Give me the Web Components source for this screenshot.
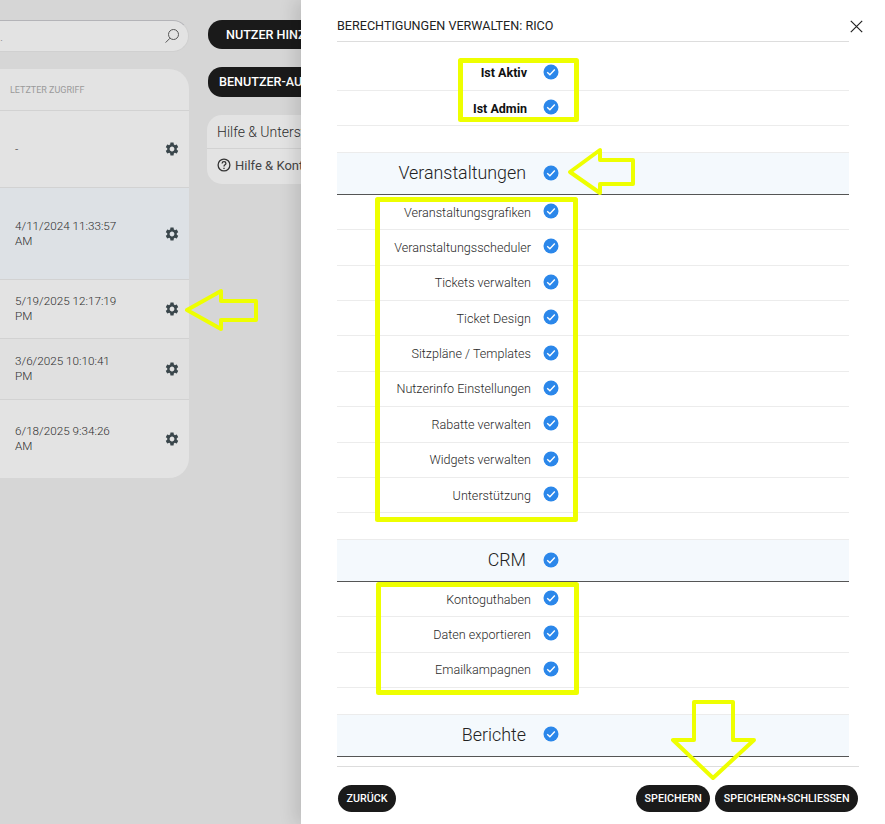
<!DOCTYPE html>
<html lang="de">
<head>
<meta charset="utf-8">
<title>Berechtigungen verwalten</title>
<style>
    html, body { margin: 0; height: 100%; }
    body { font-family: Roboto, "Liberation Sans", sans-serif; overflow: hidden; background: #d6d6d6; }
</style>
</head>
<body>
<app-page></app-page>

<script>
const GEAR = 'M19.14 12.94c.04-.3.06-.61.06-.94 0-.32-.02-.64-.07-.94l2.03-1.58c.18-.14.23-.41.12-.61l-1.92-3.32c-.12-.22-.37-.29-.59-.22l-2.39.96c-.5-.38-1.03-.7-1.62-.94l-.36-2.54c-.04-.24-.24-.41-.48-.41h-3.84c-.24 0-.43.17-.47.41l-.36 2.54c-.59.24-1.13.57-1.62.94l-2.39-.96c-.22-.08-.47 0-.59.22L2.74 8.87c-.12.21-.08.47.12.61l2.03 1.58c-.05.3-.09.63-.09.94s.02.64.07.94l-2.03 1.58c-.18.14-.23.41-.12.61l1.92 3.32c.12.22.37.29.59.22l2.39-.96c.5.38 1.03.7 1.62.94l.36 2.54c.05.24.24.41.48.41h3.84c.24 0 .44-.17.47-.41l.36-2.54c.59-.24 1.13-.56 1.62-.94l2.39.96c.22.08.47 0 .59-.22l1.92-3.32c.12-.22.07-.47-.12-.61l-2.01-1.58zM12 15.6c-1.98 0-3.6-1.62-3.6-3.6s1.62-3.6 3.6-3.6 3.6 1.62 3.6 3.6-1.62 3.6-3.6 3.6z';

// Suchfeld
class SearchBox extends HTMLElement {
    constructor() {
        super();
        this.attachShadow({ mode: 'open' });
    }
    connectedCallback() {
        this.shadowRoot.innerHTML = `
            <style>
                :host { display: flex; align-items: center; justify-content: space-between; box-sizing: border-box; height: 32px; padding: 0 8px 0 0; background: #e3e3e3; border: 1px solid #d0d0d0; border-left: 0; border-top-color: #b4b4b8; border-radius: 0 16px 16px 0; color: #8a8a8a; font-size: 13px; font-weight: 300; }
                span { margin-left: 0; white-space: nowrap; }
                svg { width: 16px; height: 16px; fill: none; stroke: #555; stroke-width: 1; }
            </style>
            <span>.</span>
            <svg viewBox="0 0 16 16"><circle cx="9.5" cy="6.5" r="5"/><path d="M6 10.2 1.6 14.6"/></svg>
        `;
    }
}
customElements.define('search-box', SearchBox);

// Tabellenzeile
class UserRow extends HTMLElement {
    constructor() {
        super();
        this.attachShadow({ mode: 'open' });
    }
    connectedCallback() {
        this.shadowRoot.innerHTML = `
            <style>
                :host { display: flex; align-items: center; justify-content: space-between; box-sizing: border-box; padding: 0 9px 0 15px; border-top: 1px solid #d2d2d2; background: var(--row-bg, transparent); height: var(--row-h); color: #2e2e2e; font-size: 11.7px; font-weight: 300; line-height: 15px; }
                div { width: 112px; }
                svg { width: 16px; height: 16px; fill: #3a464b; flex: none; }
            </style>
            <div><slot></slot></div>
            <svg viewBox="0 0 24 24"><path d="${GEAR}"/></svg>
        `;
    }
}
customElements.define('user-row', UserRow);

// Benutzertabelle
class UserTable extends HTMLElement {
    constructor() {
        super();
        this.attachShadow({ mode: 'open' });
    }
    connectedCallback() {
        this.shadowRoot.innerHTML = `
            <style>
                :host { display: block; margin-top: 17px; background: #e3e3e3; border-radius: 0 20px 20px 0; overflow: hidden; }
                header { box-sizing: border-box; height: 41px; padding: 16px 10px 0; color: #9a9a9a; font-size: 9px; font-weight: 400; }
            </style>
            <header>LETZTER ZUGRIFF</header>
            <slot></slot>
        `;
    }
}
customElements.define('user-table', UserTable);

// Schwarzer Button
class PillButton extends HTMLElement {
    constructor() {
        super();
        this.attachShadow({ mode: 'open' });
    }
    connectedCallback() {
        this.shadowRoot.innerHTML = `
            <style>
                :host { display: inline-flex; align-items: center; box-sizing: border-box; height: var(--h, 27px); padding: 0 var(--pad, 8.5px) 1px; background: #1a1a1a; color: #fff; border-radius: 14px; font-size: var(--fs, 10.7px); font-weight: 500; white-space: nowrap; }
            </style>
            <slot></slot>
        `;
    }
}
customElements.define('pill-button', PillButton);

// Hilfe-Karte
class HelpCard extends HTMLElement {
    constructor() {
        super();
        this.attachShadow({ mode: 'open' });
    }
    connectedCallback() {
        this.shadowRoot.innerHTML = `
            <style>
                :host { display: block; width: 180px; margin-top: 18px; background: #e3e3e3; border-radius: 15px; color: #2e2e2e; font-weight: 300; white-space: nowrap; }
                .title { box-sizing: border-box; height: 34px; padding: 9px 10px 0; font-size: 14px; border-bottom: 1px solid #d2d2d2; }
                .link { display: flex; align-items: center; gap: 4px; height: 34px; padding: 0 10px 3px; box-sizing: border-box; font-size: 13px; font-weight: 400; color: #444; }
                svg { width: 14px; height: 14px; fill: none; stroke: #333; stroke-width: 1.3; flex: none; }
                .link { height: 35px; }
            </style>
            <div class="title">Hilfe &amp; Unterstützung</div>
            <div class="link">
                <svg viewBox="0 0 14 14"><circle cx="7" cy="7" r="5.9"/><path d="M5.1 5.5C5.2 3 8.9 3.2 8.9 5.4 8.9 6.8 7 6.8 7 8.4"/><path d="M7 9.7v1.2"/></svg>
                Hilfe &amp; Kontakt
            </div>
        `;
    }
}
customElements.define('help-card', HelpCard);

// Blaues Häkchen
class CheckMark extends HTMLElement {
    constructor() {
        super();
        this.attachShadow({ mode: 'open' });
    }
    connectedCallback() {
        this.shadowRoot.innerHTML = `
            <style>
                :host { display: block; width: 16px; height: 16px; }
                svg { display: block; width: 16px; height: 16px; }
            </style>
            <svg viewBox="0 0 16 16"><circle cx="8" cy="8" r="7.5" fill="#2b87ea"/><path d="M4.2 8.3 6.9 10.8 11.8 5.6" fill="none" stroke="#fff" stroke-width="1.4"/></svg>
        `;
    }
}
customElements.define('check-mark', CheckMark);

// Berechtigungszeile
class PermRow extends HTMLElement {
    constructor() {
        super();
        this.attachShadow({ mode: 'open' });
    }
    connectedCallback() {
        this.shadowRoot.innerHTML = `
            <style>
                :host { display: grid; grid-template-columns: 194px 40px; align-items: center; justify-items: center; box-sizing: border-box; height: 35.4px; border-bottom: 1px solid #ececec; color: #2a2a2a; font-size: 12.6px; font-weight: 300; }
                :host([strong]) { font-weight: 700; color: #111; font-size: 12.5px; }
                :host([strong]) span { padding-right: 4px; }
                span { justify-self: end; white-space: nowrap; }
                check-mark { margin-bottom: 2px; }
            </style>
            <span><slot></slot></span>
            <check-mark></check-mark>
        `;
    }
}
customElements.define('perm-row', PermRow);

// Abschnittstitel
class PermSection extends HTMLElement {
    constructor() {
        super();
        this.attachShadow({ mode: 'open' });
    }
    connectedCallback() {
        this.shadowRoot.innerHTML = `
            <style>
                :host { display: grid; grid-template-columns: 189px 50px; align-items: center; justify-items: center; box-sizing: border-box; height: 42.55px; margin-top: 26px; padding-bottom: 2px; background: #f4f9fd; border-top: 1px solid #ececec; border-bottom: 1px solid #555; color: #222; font-size: 17.85px; font-weight: 300; }
                span { justify-self: end; white-space: nowrap; }
            </style>
            <span><slot></slot></span>
            <check-mark></check-mark>
        `;
    }
}
customElements.define('perm-section', PermSection);

// Seitenleiste mit Berechtigungen
class PermDrawer extends HTMLElement {
    constructor() {
        super();
        this.attachShadow({ mode: 'open' });
    }
    connectedCallback() {
        this.shadowRoot.innerHTML = `
            <style>
                :host { position: absolute; top: 0; right: 0; bottom: 0; width: 584px; display: flex; flex-direction: column; box-sizing: border-box; padding: 0 26px 0 36px; background: #fff; box-shadow: -6px 0 16px rgba(0,0,0,.12); color: #222; }
                header { display: flex; align-items: center; justify-content: space-between; flex: none; height: 42px; box-sizing: border-box; margin-right: 10px; padding-top: 9px; border-bottom: 1px solid #ddd; font-size: 12.6px; font-weight: 400; color: #222; }
                .close { position: absolute; top: 20px; right: 22px; width: 13px; height: 13px; }
                .scroll { flex: 1; min-height: 0; overflow: hidden; padding: 13.5px 10px 0 0; }
                footer { display: flex; align-items: center; justify-content: space-between; flex: none; height: 58px; box-sizing: border-box; border-top: 1px solid #ddd; padding: 6px 1px 0 1px; }
                .right { display: flex; gap: 5px; }
            </style>
            <header>BERECHTIGUNGEN VERWALTEN: RICO</header>
            <svg class="close" viewBox="0 0 13 13" fill="none" stroke="#222" stroke-width="1.2"><path d="M.8.8l11.4 11.4M12.2.8.8 12.2"/></svg>
            <div class="scroll"><slot></slot></div>
            <footer>
                <pill-button>ZURÜCK</pill-button>
                <div class="right">
                    <pill-button>SPEICHERN</pill-button>
                    <pill-button>SPEICHERN+SCHLIESSEN</pill-button>
                </div>
            </footer>
        `;
    }
}
customElements.define('perm-drawer', PermDrawer);

// Gelbe Markierungen aus dem Screenshot
class MarkupLayer extends HTMLElement {
    constructor() {
        super();
        this.attachShadow({ mode: 'open' });
    }
    connectedCallback() {
        this.shadowRoot.innerHTML = `
            <style>
                :host { position: absolute; inset: 0; pointer-events: none; }
                svg { display: block; width: 885px; height: 824px; fill: none; stroke: #eeff00; stroke-width: 5; stroke-linejoin: round; }
            </style>
            <svg viewBox="0 0 885 824">
                <rect x="460.5" y="60.5" width="116" height="59"/>
                <rect x="377.5" y="199.5" width="198" height="320"/>
                <rect x="378.5" y="584.5" width="198" height="108"/>
                <path d="M570 172 600 150v10h33v24h-33v9z" stroke-width="4"/>
                <path d="M187 310 221 291v10h35v19h-35v9z" stroke-width="4"/>
                <path d="M694 702h39v38h21l-41 38-40-38h21z" stroke-width="4"/>
            </svg>
        `;
    }
}
customElements.define('markup-layer', MarkupLayer);

// Gesamte Seite
class AppPage extends HTMLElement {
    constructor() {
        super();
        this.attachShadow({ mode: 'open' });
    }
    connectedCallback() {
        this.shadowRoot.innerHTML = `
            <style>
                :host { display: block; position: relative; width: 885px; height: 824px; overflow: hidden; background: #d6d6d6; }
                .page { display: grid; grid-template-columns: 189px 1fr; gap: 18px; padding-top: 20px; }
                .left { min-width: 0; }
                .side { display: flex; flex-direction: column; align-items: flex-start; }
                .add { --h: 29px; --pad: 18px; --fs: 12.6px; margin-left: 1px; }
                .users { --h: 30px; --pad: 11px; --fs: 12.6px; margin: 18px 0 0 1px; }
            </style>
            <div class="page">
                <div class="left">
                    <search-box></search-box>
                    <user-table>
                        <user-row style="--row-h:77px">-</user-row>
                        <user-row style="--row-h:92px;--row-bg:#dde1e5">4/11/2024 11:33:57 AM</user-row>
                        <user-row style="--row-h:59px">5/19/2025 12:17:19 PM</user-row>
                        <user-row style="--row-h:61px;--row-bg:#e0e0e0">3/6/2025 10:10:41 PM</user-row>
                        <user-row style="--row-h:79px">6/18/2025 9:34:26 AM</user-row>
                    </user-table>
                </div>
                <div class="side">
                    <pill-button class="add">NUTZER HINZUFÜGEN</pill-button>
                    <pill-button class="users">BENUTZER-AUSWAHL</pill-button>
                    <help-card></help-card>
                </div>
            </div>
            <perm-drawer>
                <perm-row strong>Ist Aktiv</perm-row>
                <perm-row strong>Ist Admin</perm-row>
                <perm-section>Veranstaltungen</perm-section>
                <perm-row>Veranstaltungsgrafiken</perm-row>
                <perm-row>Veranstaltungsscheduler</perm-row>
                <perm-row>Tickets verwalten</perm-row>
                <perm-row>Ticket Design</perm-row>
                <perm-row>Sitzpläne / Templates</perm-row>
                <perm-row>Nutzerinfo Einstellungen</perm-row>
                <perm-row>Rabatte verwalten</perm-row>
                <perm-row>Widgets verwalten</perm-row>
                <perm-row>Unterstützung</perm-row>
                <perm-section>CRM</perm-section>
                <perm-row>Kontoguthaben</perm-row>
                <perm-row>Daten exportieren</perm-row>
                <perm-row>Emailkampagnen</perm-row>
                <perm-section>Berichte</perm-section>
            </perm-drawer>
            <markup-layer></markup-layer>
        `;
    }
}
customElements.define('app-page', AppPage);
</script>
</body>
</html>
